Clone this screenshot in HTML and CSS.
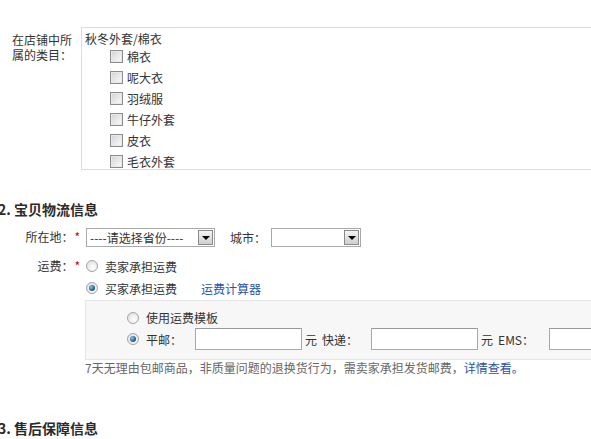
FILE: index.html
```html
<!DOCTYPE html>
<html lang="zh-CN">

<head>
    <meta charset="UTF-8">
    <meta name="viewport" content="width=device-width, initial-scale=1.0">
    <title>发布宝贝</title>
    <link rel="stylesheet" href="styles.css">
</head>

<body>
    <div class="page">
        <div class="cat-row">
            <div class="cat-label">在店铺中所属的类目：</div>
            <div class="cat-box">
                <div class="cat-title">秋冬外套/棉衣</div>
                <ul class="cat-list">
                    <li><span class="chk"></span>棉衣</li>
                    <li><span class="chk"></span>呢大衣</li>
                    <li><span class="chk"></span>羽绒服</li>
                    <li><span class="chk"></span>牛仔外套</li>
                    <li><span class="chk"></span>皮衣</li>
                    <li><span class="chk"></span>毛衣外套</li>
                </ul>
            </div>
        </div>

        <h2 class="sec-title">2. 宝贝物流信息</h2>

        <div class="field loc-row">
            <label class="field-label">所在地：<em>*</em></label>
            <div class="field-body">
                <span class="select province">----请选择省份----<i class="arrow"></i></span>
                <span class="city-label">城市：</span>
                <span class="select city"><i class="arrow"></i></span>
            </div>
        </div>

        <div class="field fee-row">
            <label class="field-label">运费：<em>*</em></label>
            <div class="field-body">
                <div class="opt"><span class="radio"></span>卖家承担运费</div>
                <div class="opt"><span class="radio on"></span>买家承担运费<a class="calc" href="#">运费计算器</a></div>
            </div>
        </div>

        <div class="fee-box">
            <div class="opt"><span class="radio"></span>使用运费模板</div>
            <div class="opt fee-inputs">
                <span class="radio on"></span>
                <span class="fee-name">平邮：</span>
                <span class="text-input"></span><span class="unit">元</span>
                <span class="fee-name">快递：</span>
                <span class="text-input"></span><span class="unit">元</span>
                <span class="fee-name ems">EMS：</span>
                <span class="text-input"></span>
            </div>
        </div>
        <p class="note">7天无理由包邮商品，非质量问题的退换货行为，需卖家承担发货邮费，<a href="#">详情查看。</a></p>

        <h2 class="sec-title last">3. 售后保障信息</h2>
    </div>
</body>

</html>
```

FILE: styles.css
```css
html,
body {
    margin: 0;
    padding: 0;
    overflow: hidden;
    background: #fff;
}

body {
    font-family: "Noto Sans CJK SC", "Liberation Sans", sans-serif;
    font-size: 12px;
    color: #333;
}

a {
    color: #2953a6;
    text-decoration: none;
}

.page {
    width: 700px;
    padding-top: 27px;
}

/* category */
.cat-row {
    display: flex;
    align-items: flex-start;
}

.cat-label {
    width: 60px;
    margin-left: 12px;
    margin-right: 9px;
    padding-top: 5px;
    line-height: 15px;
}

.cat-box {
    box-sizing: border-box;
    width: 540px;
    height: 143px;
    overflow: hidden;
    border: 1px solid #dcdcdc;
    padding: 4px 3px 0;
}

.cat-title {
    line-height: 14px;
}

.cat-list {
    list-style: none;
    margin: 0;
    padding: 0 0 0 25px;
}

.cat-list li {
    display: flex;
    align-items: center;
    height: 21px;
}

.chk {
    box-sizing: border-box;
    width: 13px;
    height: 13px;
    margin-right: 4px;
    border: 1px solid #8c8c8c;
    background: linear-gradient(135deg, #d2d2d2, #f4f4f4 80%);
    box-shadow: inset 0 0 0 1px #e8e8e8;
}

/* sections */
.sec-title {
    margin: 29px 0 0 -2px;
    font-size: 14px;
    font-weight: bold;
    line-height: 20px;
    color: #2b2b2b;
}

.sec-title.last {
    margin-top: 42px;
}

.field {
    display: flex;
    align-items: flex-start;
}

.loc-row {
    margin-top: 7px;
}

.fee-row {
    margin-top: 7px;
}

.field-label {
    width: 80px;
    text-align: right;
    line-height: 22px;
    flex-shrink: 0;
}

.field-label em {
    font-style: normal;
    color: #d40000;
    margin-left: 1px;
}

.field-body {
    display: flex;
    flex-direction: column;
    margin-left: 6px;
}

.loc-row .field-body {
    flex-direction: row;
    align-items: center;
    height: 22px;
}

.select {
    box-sizing: border-box;
    position: relative;
    display: inline-block;
    height: 19px;
    line-height: 17px;
    padding-left: 3px;
    border: 1px solid #a8a8a8;
    background: #fff;
}

.select.province {
    width: 129px;
}

.select.city {
    width: 90px;
}

.select .arrow {
    position: absolute;
    right: 1px;
    top: 1px;
    box-sizing: border-box;
    width: 15px;
    height: 15px;
    border: 1px solid #8a8a8a;
    background: linear-gradient(#f4f4f4, #cfcfcf);
}

.select .arrow::after {
    content: "";
    position: absolute;
    left: 3px;
    top: 5px;
    border-left: 4px solid transparent;
    border-right: 4px solid transparent;
    border-top: 4px solid #000;
}

.city-label {
    margin-left: 15px;
    margin-right: 5px;
}

/* radios */
.opt {
    display: flex;
    align-items: center;
    height: 22px;
}

.radio {
    box-sizing: border-box;
    width: 12px;
    height: 12px;
    margin-right: 7px;
    border-radius: 50%;
    border: 1px solid #a4a4a4;
    background: radial-gradient(circle at 60% 65%, #fff, #dadada);
    position: relative;
    flex-shrink: 0;
}

.radio.on::after {
    content: "";
    position: absolute;
    left: 2px;
    top: 2px;
    width: 6px;
    height: 6px;
    border-radius: 50%;
    background: radial-gradient(circle at 35% 35%, #8ec3ea, #1f5f93 60%, #0e3e66);
}

.calc {
    margin-left: 24px;
}

/* fee box */
.fee-box {
    width: 560px;
    margin: 1px 0 0 85px;
    padding: 6px 0 9px 41px;
    border: 1px solid #e6e6e6;
    background: #f7f7f7;
}

.fee-box .opt {
    height: 21px;
}

.fee-box .fee-inputs {
    height: 22px;
}

.fee-name {
    margin-right: 13px;
}

.fee-name.ems {
    margin-right: 15px;
}

.unit {
    margin: 0 5px 0 3px;
}

.text-input {
    box-sizing: border-box;
    width: 107px;
    height: 22px;
    border: 1px solid #a9a9a9;
    border-top-color: #9a9a9a;
    background: #fff;
}

.note {
    margin: 0 0 0 85px;
    line-height: 16px;
    color: #666;
}
```
